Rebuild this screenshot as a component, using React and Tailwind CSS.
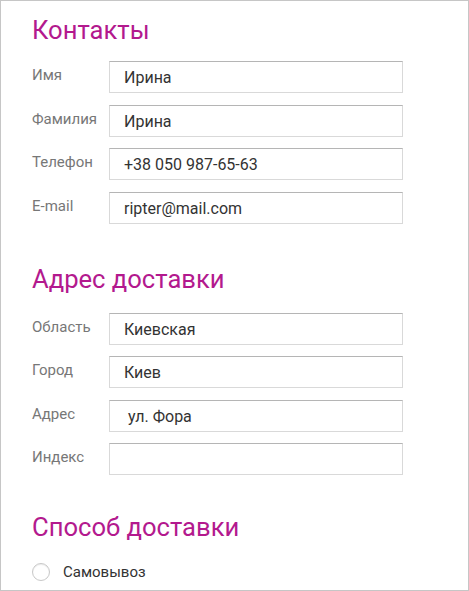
import React from "react";

function Field({ label, value }) {
  return (
    <div className="flex h-[32px]">
      <div className="w-[77px] shrink-0 pt-[4px] text-[15px] leading-[20px] text-[#777777]">{label}</div>
      <div className="w-[294px] h-[32px] border border-[#d9d9d9] border-t-[#b5b5b5] pl-[14px] pt-[6px] text-[16px] leading-[20px] text-[#333333] whitespace-pre">
        {value}
      </div>
    </div>
  );
}

function Heading({ children, className }) {
  return (
    <h2 className={"text-[25.6px] leading-[30px] text-[#b3198e] font-normal " + className}>{children}</h2>
  );
}

export default function App() {
  return (
    <div className="w-[469px] h-[591px] border border-[#c6c6c6] bg-white pl-[31px] pt-[14px] overflow-hidden font-['Roboto',sans-serif]">
      <Heading className="mb-[16px]">Контакты</Heading>
      <div className="flex flex-col gap-[11.5px]">
        <Field label="Имя" value="Ирина" />
        <Field label="Фамилия" value="Ирина" />
        <Field label="Телефон" value="+38 050 987-65-63" />
        <Field label="E-mail" value="ripter@mail.com" />
      </div>
      <Heading className="mt-[40px] mb-[19px]">Адрес доставки</Heading>
      <div className="flex flex-col gap-[11.5px]">
        <Field label="Область" value="Киевская" />
        <Field label="Город" value="Киев" />
        <Field label="Адрес" value=" ул. Фора" />
        <Field label="Индекс" value="" />
      </div>
      <Heading className="mt-[37px] mb-[20px]">Способ доставки</Heading>
      <label className="flex items-center gap-[13px]">
        <span className="w-[18px] h-[18px] rounded-full border border-[#c8c8c8] bg-white shadow-[inset_0_1px_1px_rgba(0,0,0,0.08)]" />
        <span className="text-[15px] leading-[20px] text-[#333333]">Самовывоз</span>
      </label>
    </div>
  );
}
